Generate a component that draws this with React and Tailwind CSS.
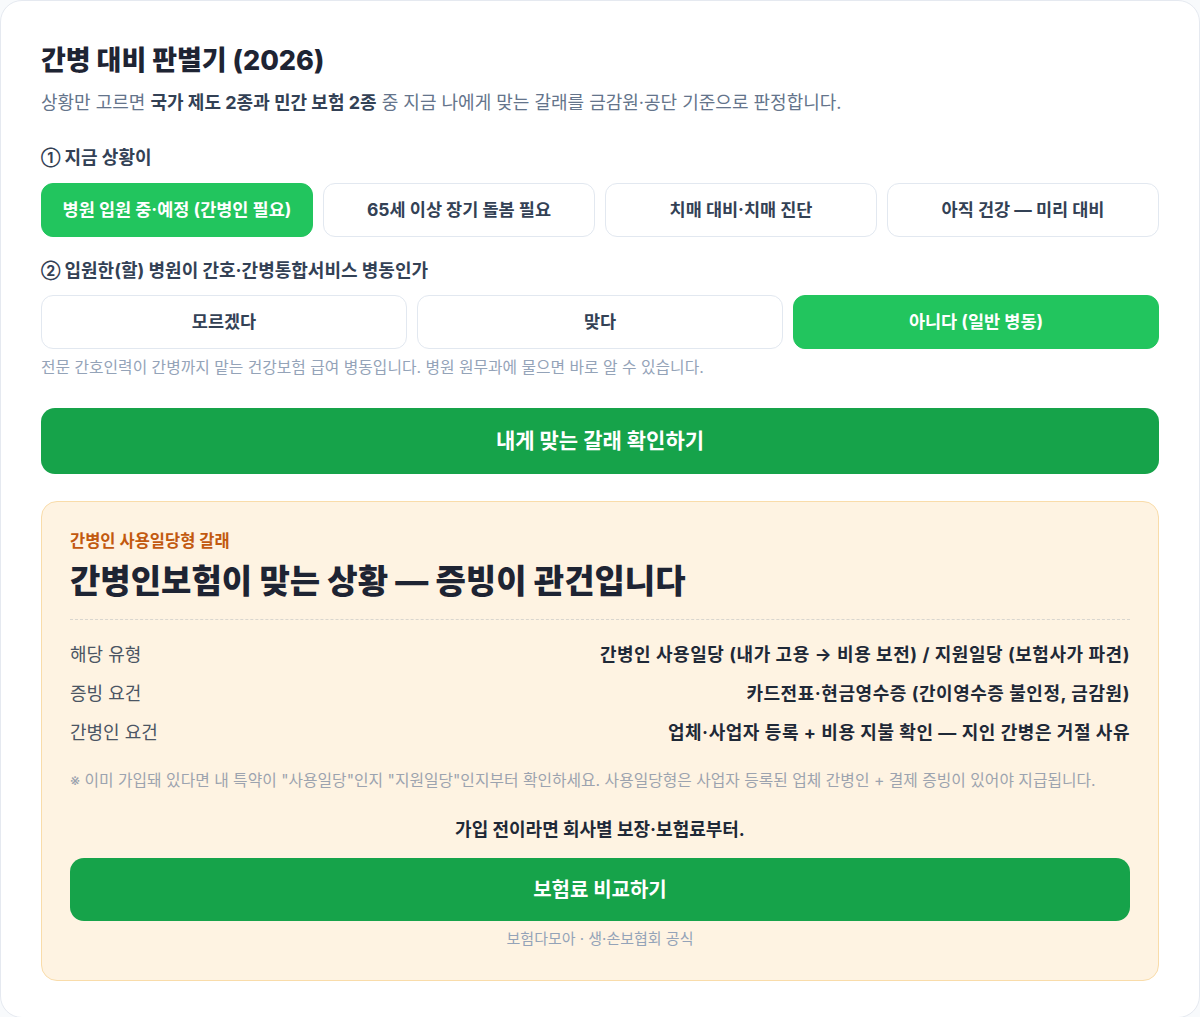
import React, { useState } from "react";

const situations = [
  "병원 입원 중·예정 (간병인 필요)",
  "65세 이상 장기 돌봄 필요",
  "치매 대비·치매 진단",
  "아직 건강 — 미리 대비",
];

const wardOptions = ["모르겠다", "맞다", "아니다 (일반 병동)"];

const resultRows = [
  ["해당 유형", "간병인 사용일당 (내가 고용 → 비용 보전) / 지원일당 (보험사가 파견)"],
  ["증빙 요건", "카드전표·현금영수증 (간이영수증 불인정, 금감원)"],
  ["간병인 요건", "업체·사업자 등록 + 비용 지불 확인 — 지인 간병은 거절 사유"],
];

function OptionButton({ label, active, onClick }) {
  return (
    <button
      type="button"
      onClick={onClick}
      className={
        active
          ? "h-[54px] rounded-xl border border-[#22c55e] bg-[#22c55e] text-[17.5px] font-bold text-white"
          : "h-[54px] rounded-xl border border-[#e2e8f0] bg-white text-[17.5px] font-bold text-[#334155]"
      }
    >
      {label}
    </button>
  );
}

export default function App() {
  const [situation, setSituation] = useState(0);
  const [ward, setWard] = useState(2);

  return (
    <div className="min-h-screen bg-[#f8fafc] font-['Inter','Noto_Sans_CJK_KR',sans-serif]">
      <div className="rounded-[22px] border border-[#e5e9f0] bg-white px-10 pt-10 pb-9">
        <h1 className="text-[27px] font-extrabold leading-[40px] text-[#1e2433]">간병 대비 판별기 (2026)</h1>
        <p className="mt-[9px] text-[18px] leading-[26px] text-[#64748b]">
          상황만 고르면 <b className="font-bold text-[#334155]">국가 제도 2종과 민간 보험 2종</b> 중 지금 나에게 맞는 갈래를
          금감원·공단 기준으로 판정합니다.
        </p>

        <div className="mt-[30px] flex items-center gap-1 text-[18px] font-bold leading-6 text-[#334155]">
          <span className="text-[14px]">①</span>
          <span>지금 상황이</span>
        </div>
        <div className="mt-[13px] grid grid-cols-4 gap-[10px]">
          {situations.map((s, i) => (
            <OptionButton key={s} label={s} active={situation === i} onClick={() => setSituation(i)} />
          ))}
        </div>

        <div className="mt-[22px] flex items-center gap-1 text-[18px] font-bold leading-6 text-[#334155]">
          <span className="text-[14px]">②</span>
          <span>입원한(할) 병원이 간호·간병통합서비스 병동인가</span>
        </div>
        <div className="mt-3 grid grid-cols-3 gap-[10px]">
          {wardOptions.map((s, i) => (
            <OptionButton key={s} label={s} active={ward === i} onClick={() => setWard(i)} />
          ))}
        </div>
        <p className="mt-2 text-[15.8px] leading-[22px] text-[#94a3b8]">
          전문 간호인력이 간병까지 맡는 건강보험 급여 병동입니다. 병원 원무과에 물으면 바로 알 수 있습니다.
        </p>

        <button
          type="button"
          className="mt-[29px] h-[66px] w-full rounded-[14px] bg-[#16a34a] text-[21px] font-bold text-white"
        >
          내게 맞는 갈래 확인하기
        </button>

        <div className="mt-[27px] rounded-2xl border border-[#f9dcaa] bg-[#fef3e2] px-7 pt-7 pb-[31px]">
          <div className="text-[16.5px] font-bold leading-[22px] text-[#c2590f]">간병인 사용일당형 갈래</div>
          <h2 className="mt-2 text-[33px] font-extrabold leading-[42px] text-[#1e2433]">
            간병인보험이 맞는 상황 — 증빙이 관건입니다
          </h2>
          <div className="mt-[17px] border-t border-dashed border-[#d9d6cf]" />
          <div className="pt-[15px]">
            {resultRows.map(([k, v]) => (
              <div key={k} className="flex h-[39px] items-center justify-between text-[18px]">
                <span className="text-[#4b5563]">{k}</span>
                <span className="font-bold tracking-[0.03em] text-[#1f2937]">{v}</span>
              </div>
            ))}
          </div>
          <p className="mt-[19px] text-[15.8px] leading-5 text-[#9ca3af]">
            ※ 이미 가입돼 있다면 내 특약이 "사용일당"인지 "지원일당"인지부터 확인하세요. 사용일당형은 사업자 등록된 업체 간병인 +
            결제 증빙이 있어야 지급됩니다.
          </p>
          <p className="mt-[27px] text-center text-[18px] font-bold leading-6 text-[#1f2937]">
            가입 전이라면 회사별 보장·보험료부터.
          </p>
          <button
            type="button"
            className="mt-4 h-[63px] w-full rounded-[14px] bg-[#16a34a] text-[20px] font-bold text-white"
          >
            보험료 비교하기
          </button>
          <p className="mt-2 text-center text-[15px] leading-5 text-[#94a3b8]">보험다모아 · 생·손보협회 공식</p>
        </div>
      </div>
    </div>
  );
}
